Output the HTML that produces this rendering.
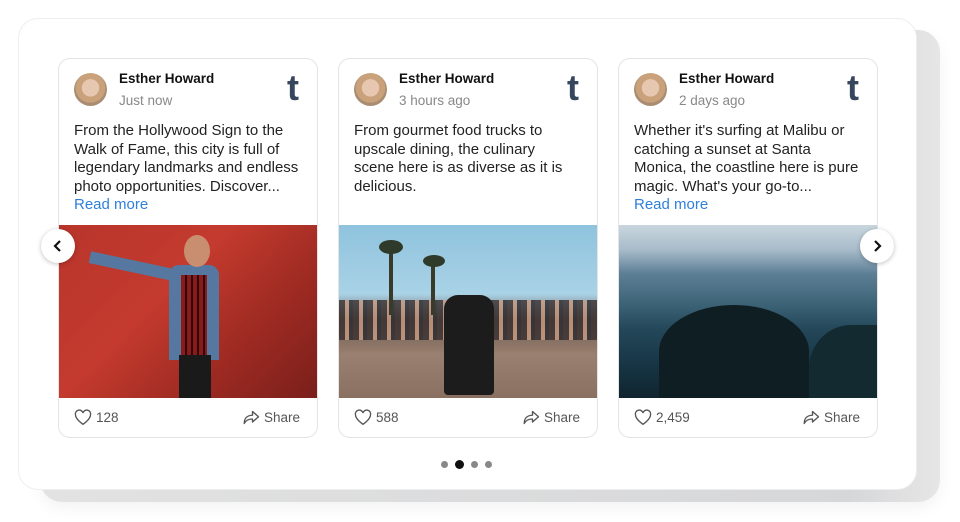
<!DOCTYPE html>
<html><head><meta charset="utf-8"><style>
*{box-sizing:border-box;margin:0;padding:0}
body{width:960px;height:522px;background:#fff;font-family:"Liberation Sans",sans-serif;position:relative;overflow:hidden}
.back{position:absolute;left:40px;top:30px;width:900px;height:472px;border-radius:22px;background:linear-gradient(90deg,#e2e2e2,#d6d7d9 90%,#e6e6e6);box-shadow:0 6px 16px rgba(0,0,0,.05)}
.panel{position:absolute;left:18px;top:18px;width:899px;height:472px;border-radius:20px;background:#fff;border:1px solid #eee}
.card{position:absolute;top:58px;width:260px;height:380px;border:1px solid #e4e4e4;border-radius:12px;background:#fff;overflow:hidden}
.av{position:absolute;left:15px;top:14px;width:33px;height:33px;border-radius:50%;background:radial-gradient(circle at 50% 45%,#e8c7b0 0 35%,#c9a27c 36% 60%,#a98c72 61%)}
.name{position:absolute;left:60px;top:12px;font-size:13.5px;font-weight:bold;color:#111}
.time{position:absolute;left:60px;top:34px;font-size:13.5px;color:#888}
.t{position:absolute;right:18px;top:13px;font-size:36px;font-weight:bold;color:#36465d;font-family:"Liberation Sans",sans-serif;line-height:32px}
.txt{position:absolute;left:15px;top:63px;width:226px;font-size:15px;line-height:18.6px;color:#222}
.txt a{color:#2f80d9;text-decoration:none}
.img{position:absolute;left:0;top:166px;width:260px;height:173px}
.ft{position:absolute;left:15px;right:17px;top:350px;font-size:13.5px;color:#555;display:flex;justify-content:space-between;align-items:center}
.ft span{display:flex;align-items:center;gap:4px}
.arr{position:absolute;top:229px;width:34px;height:34px;border-radius:50%;background:#fff;box-shadow:0 1px 5px rgba(0,0,0,.25);display:flex;align-items:center;justify-content:center}
.dots{position:absolute;left:441px;top:460px;display:flex;gap:7px;align-items:center}
.dots i{width:7px;height:7px;border-radius:50%;background:#888;display:block}
.dots i.a{width:9px;height:9px;background:#111}
</style></head><body>
<div class="back"></div>
<div class="panel"></div>

<div class="card" style="left:58px">
<div class="av"></div><div class="name">Esther Howard</div><div class="time">Just now</div><div class="t">t</div>
<div class="txt">From the Hollywood Sign to the Walk of Fame, this city is full of legendary landmarks and endless photo opportunities. Discover...<br><a>Read more</a></div>
<div class="img" style="background:linear-gradient(135deg,#b8352b,#c43a2e 40%,#9d2a22 70%,#7a1f1a)">
<div style="position:absolute;left:110px;top:40px;width:50px;height:95px;background:#5577a0;border-radius:10px 10px 0 0"></div>
<div style="position:absolute;left:122px;top:50px;width:26px;height:80px;background:repeating-linear-gradient(90deg,#8b1a1a 0 4px,#2a0a0a 4px 6px)"></div>
<div style="position:absolute;left:120px;top:130px;width:32px;height:43px;background:#1a1a1a"></div>
<div style="position:absolute;left:125px;top:10px;width:26px;height:32px;border-radius:50%;background:#c98e70"></div>
<div style="position:absolute;left:30px;top:35px;width:85px;height:12px;background:#5577a0;transform:rotate(12deg)"></div>
</div>
<div class="ft"><span><svg width="18" height="17" viewBox="0 0 24 22"><path d="M12 20S2 13.5 2 7.5A5 5 0 0 1 12 5a5 5 0 0 1 10 2.5C22 13.5 12 20 12 20z" fill="none" stroke="#555" stroke-width="1.8"/></svg>128</span><span><svg width="18" height="17" viewBox="0 0 24 22"><path d="M14 3l8 7-8 7v-4C8 13 5 15 3 19c0-7 4-11 11-11z" fill="none" stroke="#555" stroke-width="1.8" stroke-linejoin="round"/></svg>Share</span></div>
</div>

<div class="card" style="left:338px">
<div class="av"></div><div class="name">Esther Howard</div><div class="time">3 hours ago</div><div class="t">t</div>
<div class="txt">From gourmet food trucks to<br>upscale dining, the culinary<br>scene here is as diverse as it is<br>delicious.</div>
<div class="img" style="background:linear-gradient(180deg,#8fc3de 0,#a9d2e6 40%,#6a5a50 55%,#9a8070 75%,#8a7060)">
<div style="position:absolute;left:0;top:75px;width:260px;height:40px;background:repeating-linear-gradient(90deg,#3a3030 0 6px,#c89a80 6px 10px,#2a2a30 10px 14px);opacity:.8"></div>
<div style="position:absolute;left:105px;top:70px;width:50px;height:100px;background:#1c1c1c;border-radius:14px 14px 4px 4px"></div>
<div style="position:absolute;left:50px;top:20px;width:4px;height:70px;background:#3a3a2a"></div>
<div style="position:absolute;left:92px;top:35px;width:4px;height:55px;background:#3a3a2a"></div>
<div style="position:absolute;left:40px;top:15px;width:24px;height:14px;border-radius:50%;background:#2f3a2a"></div>
<div style="position:absolute;left:84px;top:30px;width:22px;height:12px;border-radius:50%;background:#2f3a2a"></div>
</div>
<div class="ft"><span><svg width="18" height="17" viewBox="0 0 24 22"><path d="M12 20S2 13.5 2 7.5A5 5 0 0 1 12 5a5 5 0 0 1 10 2.5C22 13.5 12 20 12 20z" fill="none" stroke="#555" stroke-width="1.8"/></svg>588</span><span><svg width="18" height="17" viewBox="0 0 24 22"><path d="M14 3l8 7-8 7v-4C8 13 5 15 3 19c0-7 4-11 11-11z" fill="none" stroke="#555" stroke-width="1.8" stroke-linejoin="round"/></svg>Share</span></div>
</div>

<div class="card" style="left:618px">
<div class="av"></div><div class="name">Esther Howard</div><div class="time">2 days ago</div><div class="t">t</div>
<div class="txt">Whether it's surfing at Malibu or catching a sunset at Santa Monica, the coastline here is pure magic. What's your go-to...<br><a>Read more</a></div>
<div class="img" style="background:linear-gradient(180deg,#c9d6de 0,#a9bccb 14%,#5d7f96 28%,#3e6478 45%,#24485a 60%,#173646 80%,#10242e)">
<div style="position:absolute;left:40px;top:80px;width:150px;height:93px;border-radius:50% 50% 0 0;background:#0f1e22"></div>
<div style="position:absolute;left:190px;top:100px;width:70px;height:73px;border-radius:60% 0 0 0;background:#132a30"></div>
</div>
<div class="ft"><span><svg width="18" height="17" viewBox="0 0 24 22"><path d="M12 20S2 13.5 2 7.5A5 5 0 0 1 12 5a5 5 0 0 1 10 2.5C22 13.5 12 20 12 20z" fill="none" stroke="#555" stroke-width="1.8"/></svg>2,459</span><span><svg width="18" height="17" viewBox="0 0 24 22"><path d="M14 3l8 7-8 7v-4C8 13 5 15 3 19c0-7 4-11 11-11z" fill="none" stroke="#555" stroke-width="1.8" stroke-linejoin="round"/></svg>Share</span></div>
</div>

<div class="arr" style="left:41px"><svg width="12" height="14" viewBox="0 0 12 14"><path d="M8 2L3 7l5 5" fill="none" stroke="#111" stroke-width="2.2"/></svg></div>
<div class="arr" style="left:860px"><svg width="12" height="14" viewBox="0 0 12 14"><path d="M4 2l5 5-5 5" fill="none" stroke="#111" stroke-width="2.2"/></svg></div>
<div class="dots"><i></i><i class="a"></i><i></i><i></i></div>
</body></html>
